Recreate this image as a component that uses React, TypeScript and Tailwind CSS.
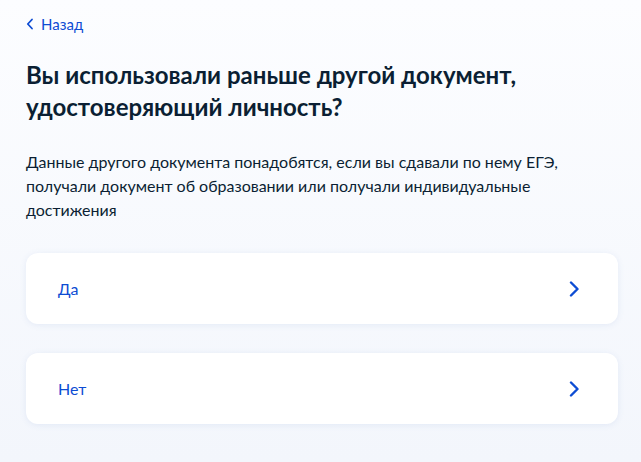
import React from "react";

function Chevron({ className = "" }: { className?: string }) {
  return (
    <svg className={className} width="10" height="16" viewBox="0 0 10 16" fill="none">
      <path d="M2 1.5L8.5 8L2 14.5" stroke="#0d4cd3" strokeWidth="2.4" strokeLinecap="round" strokeLinejoin="round" />
    </svg>
  );
}

function Option({ label }: { label: string }) {
  return (
    <button className="flex h-[71px] w-full items-center justify-between rounded-[12px] bg-white pl-[32px] pr-[39px] text-left shadow-[0_1px_6px_rgba(100,130,200,0.12)]">
      <span className="text-[16px] leading-[24px] text-[#0d4cd3]">{label}</span>
      <Chevron />
    </button>
  );
}

export default function App() {
  return (
    <div
      className="min-h-[462px] w-full bg-gradient-to-b from-[#fcfdff] to-[#f3f6fc] pl-[26px] pr-[23px] pt-[14px]"
      style={{ fontFamily: "Lato, 'Noto Sans', sans-serif" }}
    >
      <a href="#" className="flex w-fit items-center gap-[7px] text-[15px] leading-[20px] text-[#0d4cd3]">
        <svg width="8" height="12" viewBox="0 0 8 12" fill="none">
          <path d="M6 1.5L1.8 6L6 10.5" stroke="#0d4cd3" strokeWidth="1.8" strokeLinecap="round" strokeLinejoin="round" />
        </svg>
        Назад
      </a>
      <h1 className="mt-[25px] text-[24px] font-bold leading-[32px] text-[#0b1f33]">
        Вы использовали раньше другой документ,
        <br />
        удостоверяющий личность?
      </h1>
      <p className="mt-[27px] max-w-[560px] text-[16px] leading-[24px] text-[#0b1f33]">
        Данные другого документа понадобятся, если вы сдавали по нему ЕГЭ, получали документ об образовании или получали индивидуальные достижения
      </p>
      <div className="mt-[31px] flex flex-col gap-[29px]">
        <Option label="Да" />
        <Option label="Нет" />
      </div>
    </div>
  );
}
